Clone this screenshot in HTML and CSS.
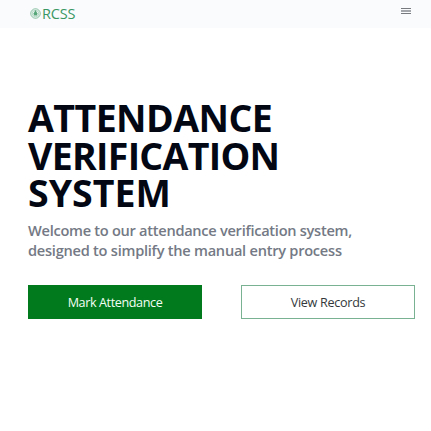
FILE: index.html
```html
<!DOCTYPE html>
<html lang="en">
<head>
<meta charset="utf-8">
<title>Attendance Verification System</title>
<link rel="stylesheet" href="styles.css">
</head>
<body>
<header class="navbar">
  <a class="brand">
    <svg class="brand-logo" viewBox="0 0 22 22" fill="none" stroke="#399763">
      <circle cx="11" cy="11" r="9.5" stroke-width="1.8" opacity=".65"/>
      <circle cx="11" cy="11" r="6.5" stroke-width="1.5" opacity=".5"/>
      <path d="M11 4l4 7-1 4H8l-1-4z" fill="#399763" stroke="none" opacity=".85"/>
    </svg>
    <span class="brand-name">RCSS</span>
  </a>
  <svg class="menu" viewBox="0 0 10 8"><path fill="#777b80" d="M0 1h10v1H0zM0 6h10v1H0z"/><path fill="#a3a7ab" d="M0 3h10v2H0z"/></svg>
</header>
<main class="hero">
  <h1 class="title"><span class="line line-1">ATTENDANCE</span> <span class="line line-2">VERIFICATION</span> <span class="line line-3">SYSTEM</span></h1>
  <p class="subtitle"><span class="line">Welcome to our attendance verification system,</span> <span class="line sub-2">designed to simplify the manual entry process</span></p>
  <div class="actions">
    <a class="button button-primary">Mark Attendance</a>
    <a class="button button-outline">View Records</a>
  </div>
</main>
</body>
</html>
```
FILE: styles.css
```css
* { box-sizing: border-box; }
body {
  margin: 0;
  background: #fefffe;
  font-family: "Open Sans", "Noto Sans", sans-serif;
}
.navbar {
  display: flex;
  justify-content: space-between;
  height: 28px;
  padding: 0 20px 0 30px;
  background: #fafbfd;
}
.brand {
  display: flex;
  gap: 1px;
  color: #399763;
}
.brand-logo { width: 11px; height: 11px; margin-top: 8px; }
.brand-name {
  font-size: 14.5px;
  line-height: 28px;
  letter-spacing: -0.15px;
}
.menu { width: 10px; height: 8px; margin-top: 7px; }
.hero { padding: 71px 16px 0 28px; }
.line { display: block; }
.title {
  margin: 0;
  font-size: 37.5px;
  line-height: 37.5px;
  font-weight: 700;
  color: #030613;
  white-space: nowrap;
}
.line-1 { letter-spacing: -0.55px; }
.line-2 { letter-spacing: -0.7px; }
.subtitle {
  margin: 8px 0 0;
  font-size: 14.6px;
  line-height: 20px;
  font-weight: 600;
  letter-spacing: -0.28px;
  color: #747985;
  white-space: nowrap;
}
.sub-2 { letter-spacing: -0.25px; }
.actions {
  display: grid;
  grid-template-columns: 174px 174px;
  justify-content: space-between;
  margin-top: 25px;
}
.button {
  height: 34px;
  border: 1px solid #017a1d;
  font-size: 12.6px;
  line-height: 34px;
  letter-spacing: -0.4px;
  text-align: center;
}
.button-primary { background: #017a1d; color: #f4fff5; }
.button-outline { border-color: #79b293; color: #34383c; letter-spacing: -0.3px; }
```
